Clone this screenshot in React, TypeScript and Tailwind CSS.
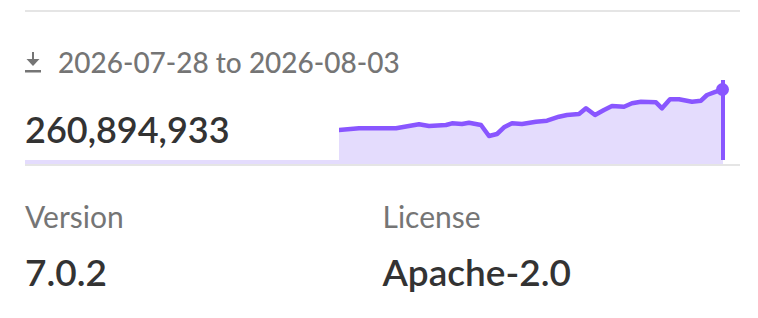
import React from 'react'

const points: [number, number][] = [
  [340, 130], [360, 128.3], [397, 128.3], [420, 124.3], [430, 126], [447, 125],
  [453, 123.3], [463, 124], [470, 122.7], [482, 125], [490, 136], [498, 134],
  [505, 127.3], [513, 123.3], [523, 124], [537, 121.7], [548, 120.7], [560, 116.7],
  [568, 115], [580, 114], [587, 108.3], [596, 115], [605, 110], [613, 106],
  [625, 106.7], [633, 103.3], [642, 101.7], [657, 102.3], [663, 108.3], [671, 99.3],
  [680, 99.3], [693, 101.7], [702, 100.7], [708, 95], [717, 91.7], [723, 89.3],
]

const Sparkline = () => {
  const line = points.map(([x, y]) => `${x},${y}`).join(' ')
  const area = `340,160 ${line} 723,160`
  return (
    <svg width="392" height="82" viewBox="340 78 392 82" className="block">
      <polygon points={area} fill="#e4dcfd" />
      <polyline points={line} fill="none" stroke="#8956ff" strokeWidth="4.5" strokeLinejoin="round" strokeLinecap="round" />
      <rect x="722" y="80" width="4" height="80" fill="#8956ff" />
      <circle cx="723.5" cy="89.5" r="6.5" fill="#8956ff" />
    </svg>
  )
}

const DownloadIcon = () => (
  <svg width="16" height="21" viewBox="0 0 16 21" fill="#757575" className="block">
    <rect x="7" y="0" width="2" height="10" />
    <polygon points="1.5,7 14.5,7 8,14" />
    <rect x="0" y="18" width="16" height="2.5" />
  </svg>
)

export default function App() {
  return (
    <div className="w-[758px] h-[318px] bg-white px-[25px] pr-[18px] pt-[10px]" style={{ fontFamily: 'Lato, "Liberation Sans", sans-serif' }}>
      <div className="border-t-2 border-[#e5e5e5]">
        <div className="flex items-center gap-[17px] h-[40px] mt-[30px]">
          <DownloadIcon />
          <span className="text-[28px] leading-none font-medium text-[#757575]">2026-07-28 to 2026-08-03</span>
        </div>
        <div className="flex items-end h-[82px] -mt-[4px]">
          <div className="flex-1 pb-[11px]">
            <span className="text-[36px] leading-none font-semibold text-[#333333]">260,894,933</span>
          </div>
          <Sparkline />
          <div className="w-[9px]" />
        </div>
        <div className="h-[4px] bg-[#e4dcfd] mr-[17px]" />
        <div className="h-[2px] bg-[#e5e5e5]" />
      </div>
      <div className="grid grid-cols-2 pt-[35px]">
        <div>
          <div className="text-[30px] leading-none text-[#757575]">Version</div>
          <div className="text-[37px] leading-none font-semibold text-[#333333] mt-[22px]">7.0.2</div>
        </div>
        <div>
          <div className="text-[30px] leading-none text-[#757575]">License</div>
          <div className="text-[37px] leading-none font-semibold text-[#333333] mt-[22px]">Apache-2.0</div>
        </div>
      </div>
    </div>
  )
}
